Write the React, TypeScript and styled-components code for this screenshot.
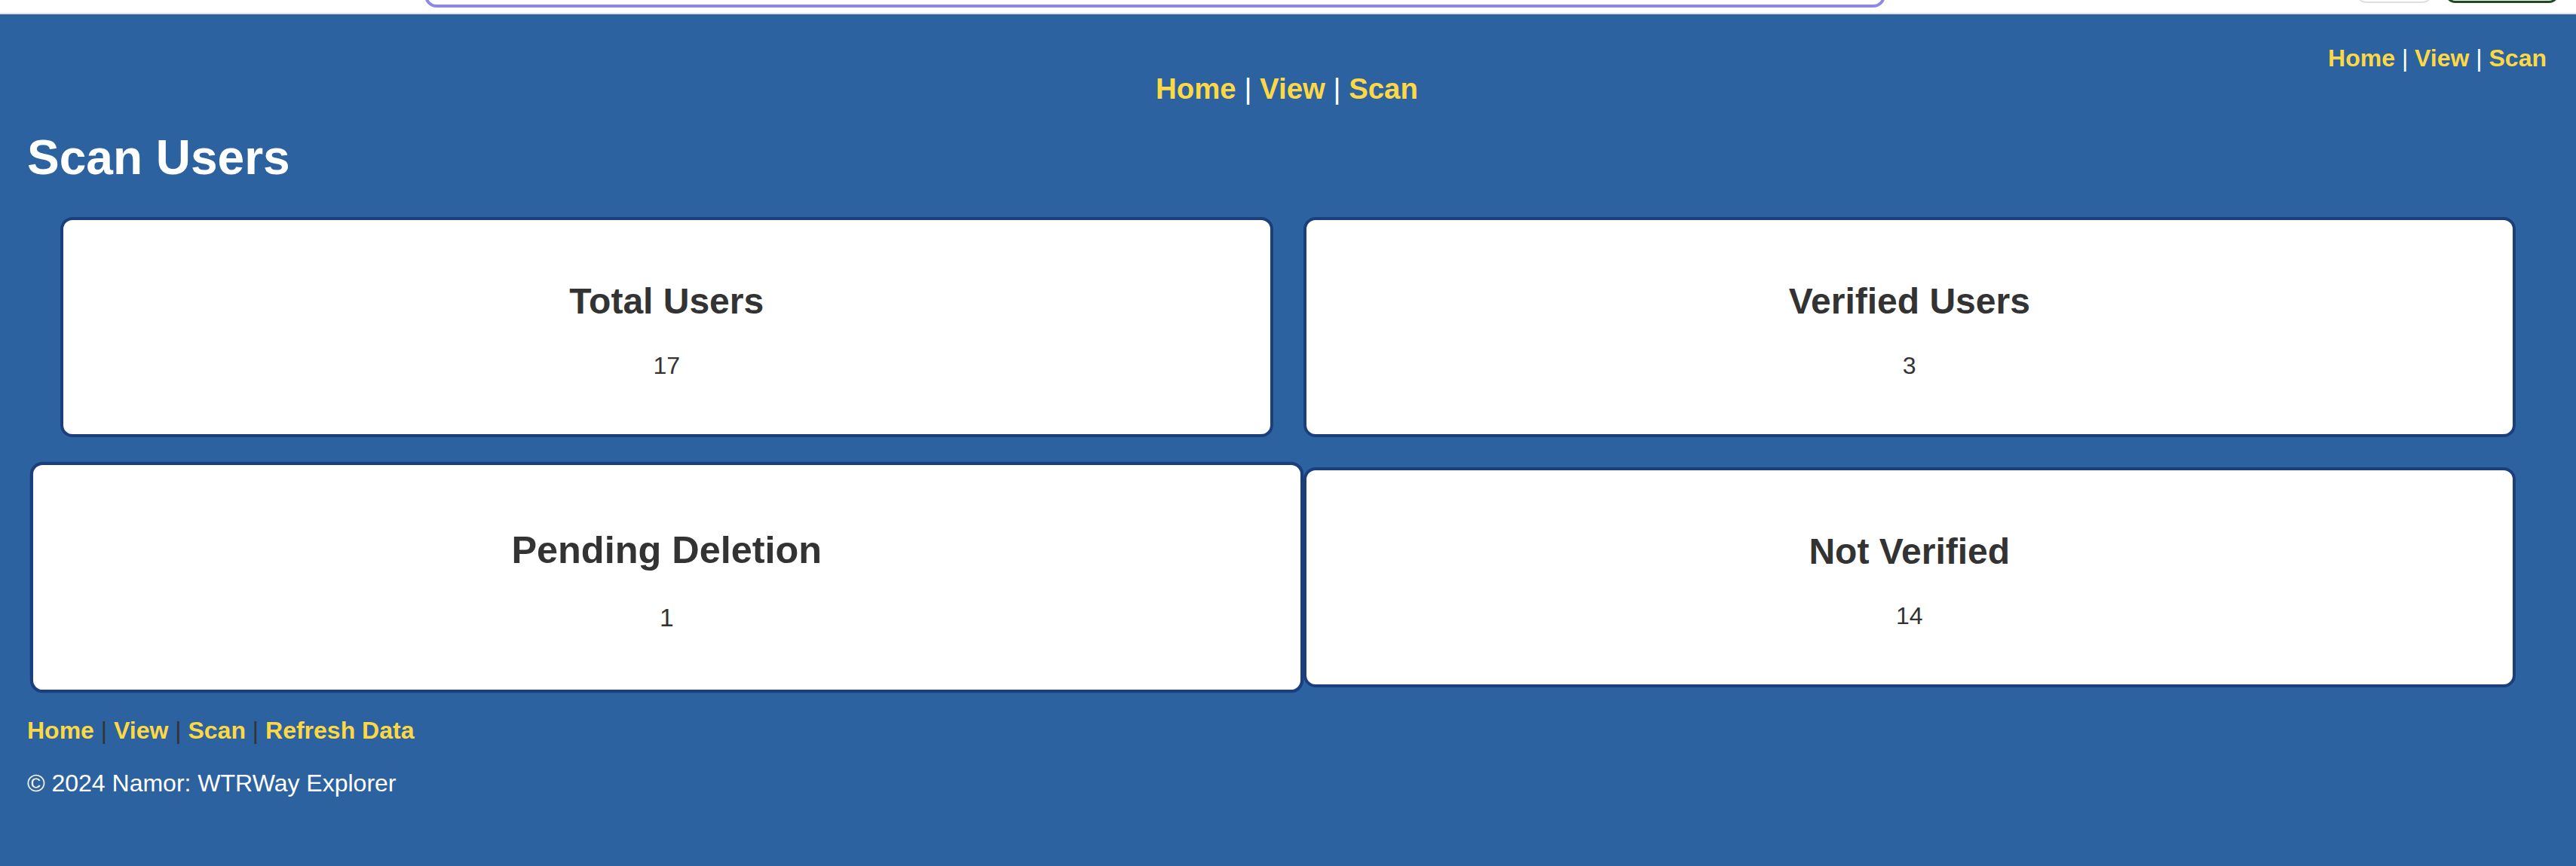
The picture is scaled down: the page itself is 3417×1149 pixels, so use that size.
import React from "react";
import styled, { createGlobalStyle, css } from "styled-components";

const GlobalStyle = createGlobalStyle`
  html, body {
    margin: 0;
    padding: 0;
  }
  body {
    background: #2c62a0;
    font-family: "Liberation Sans", Arial, Helvetica, sans-serif;
    min-height: 1149px;
  }
`;

const TopStrip = styled.div`
  height: 17px;
  background: #ffffff;
  border-bottom: 2px solid #e2e2e2;
  overflow: hidden;
  display: flex;
  align-items: flex-end;
  position: relative;
`;

const SearchEdge = styled.div`
  margin-left: 563px;
  width: 1938px;
  height: 60px;
  margin-bottom: 7px;
  box-sizing: border-box;
  border: 4px solid #8d87e6;
  border-radius: 16px;
  flex: none;
`;

const ButtonEdge = styled.div<{ $variant: "ghost" | "dark"; $left: number; $width: number }>`
  flex: none;
  margin-left: ${(p) => p.$left}px;
  width: ${(p) => p.$width}px;
  height: 60px;
  margin-bottom: 13px;
  box-sizing: border-box;
  border-radius: 14px;
  ${(p) =>
    p.$variant === "ghost"
      ? css`
          border: 2px solid #dedee6;
        `
      : css`
          border: 3px solid #1d4a1f;
        `}
`;

const Main = styled.main`
  padding: 40px 39px 60px 36px;
  color: #ffffff;
`;

const NavBar = styled.nav<{ $align: "right" | "center"; $size: number; $lh: number }>`
  text-align: ${(p) => p.$align};
  font-size: ${(p) => p.$size}px;
  line-height: ${(p) => p.$lh}px;
  white-space: pre;
`;

const NavLink = styled.a`
  color: #fdd845;
  font-weight: 700;
  text-decoration: none;
`;

const Sep = styled.span<{ $dark?: boolean }>`
  color: ${(p) => (p.$dark ? "#333333" : "#ffffff")};
  font-weight: 400;
`;

const Title = styled.h1`
  margin: 32px 0 42px 0;
  font-size: 64px;
  line-height: 74px;
  font-weight: 700;
  color: #ffffff;
`;

const Grid = styled.section`
  display: grid;
  grid-template-columns: 1fr 1fr;
  gap: 40px;
  margin: 0 41px 0 44px;
`;

const Card = styled.div<{ $hovered?: boolean }>`
  background: #ffffff;
  border: 4px solid #1b3f7c;
  border-radius: 16px;
  padding: 40px;
  text-align: center;
  color: #333333;
  ${(p) =>
    p.$hovered &&
    css`
      transform: scale(1.05);
    `}
`;

const CardTitle = styled.h2`
  margin: 40px 0;
  font-size: 48px;
  line-height: 55px;
  font-weight: 700;
`;

const CardValue = styled.p`
  margin: 32px 0;
  font-size: 32px;
  line-height: 37px;
`;

const FooterNav = styled.nav`
  margin-top: 39px;
  font-size: 32px;
  line-height: 37px;
  white-space: pre;
`;

const Copyright = styled.p`
  margin: 33px 0 0 0;
  font-size: 32px;
  line-height: 37px;
  color: #ffffff;
`;

const stats = [
  { label: "Total Users", value: 17 },
  { label: "Verified Users", value: 3 },
  { label: "Pending Deletion", value: 1, hovered: true },
  { label: "Not Verified", value: 14 },
];

const mainLinks = ["Home", "View", "Scan"];

export default function App() {
  return (
    <>
      <GlobalStyle />
      <TopStrip>
        <SearchEdge />
        <ButtonEdge $variant="ghost" $left={624} $width={102} />
        <ButtonEdge $variant="dark" $left={16} $width={152} />
      </TopStrip>
      <Main>
        <NavBar $align="right" $size={32} $lh={37}>
          {mainLinks.map((l, i) => (
            <React.Fragment key={l}>
              {i > 0 && <Sep> | </Sep>}
              <NavLink href="#">{l}</NavLink>
            </React.Fragment>
          ))}
        </NavBar>
        <NavBar $align="center" $size={38.4} $lh={44}>
          {mainLinks.map((l, i) => (
            <React.Fragment key={l}>
              {i > 0 && <Sep> | </Sep>}
              <NavLink href="#">{l}</NavLink>
            </React.Fragment>
          ))}
        </NavBar>
        <Title>Scan Users</Title>
        <Grid>
          {stats.map((s) => (
            <Card key={s.label} $hovered={s.hovered}>
              <CardTitle>{s.label}</CardTitle>
              <CardValue>{s.value}</CardValue>
            </Card>
          ))}
        </Grid>
        <FooterNav>
          {[...mainLinks, "Refresh Data"].map((l, i) => (
            <React.Fragment key={l}>
              {i > 0 && <Sep $dark> | </Sep>}
              <NavLink href="#">{l}</NavLink>
            </React.Fragment>
          ))}
        </FooterNav>
        <Copyright>© 2024 Namor: WTRWay Explorer</Copyright>
      </Main>
    </>
  );
}
